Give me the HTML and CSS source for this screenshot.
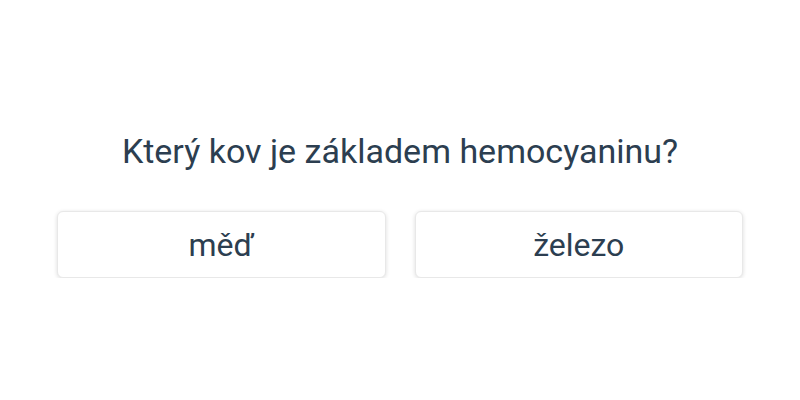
FILE: index.html
```html
<!DOCTYPE html>
<html lang="cs">
<head>
<meta charset="utf-8">
<link rel="stylesheet" href="styles.css">
</head>
<body>
<main class="quiz">
  <h1 class="question">Který kov je základem hemocyaninu?</h1>
  <div class="answers">
    <button class="answer">měď</button>
    <button class="answer">železo</button>
  </div>
</main>
</body>
</html>
```
FILE: styles.css
```css
html, body {
  margin: 0;
  padding: 0;
  background: #ffffff;
}
body {
  font-family: Roboto, "Noto Sans", sans-serif;
  color: #2c3e50;
}
.quiz {
  width: 686px;
  margin: 0 auto;
  padding-top: 127px;
  display: flex;
  flex-direction: column;
  align-items: stretch;
}
.question {
  margin: 0;
  font-size: 34px;
  font-weight: 400;
  line-height: 48px;
  text-align: center;
}
.answers {
  margin-top: 36px;
  display: grid;
  grid-template-columns: 1fr 1fr;
  gap: 29px;
}
.answer {
  height: 67px;
  background: #ffffff;
  border: 1px solid #e8e8e8;
  border-radius: 6px;
  box-shadow: 0 1px 4px rgba(0, 0, 0, 0.14);
  font-family: Roboto, "Noto Sans", sans-serif;
  font-size: 32px;
  color: #2c3e50;
  padding: 0;
}
```
